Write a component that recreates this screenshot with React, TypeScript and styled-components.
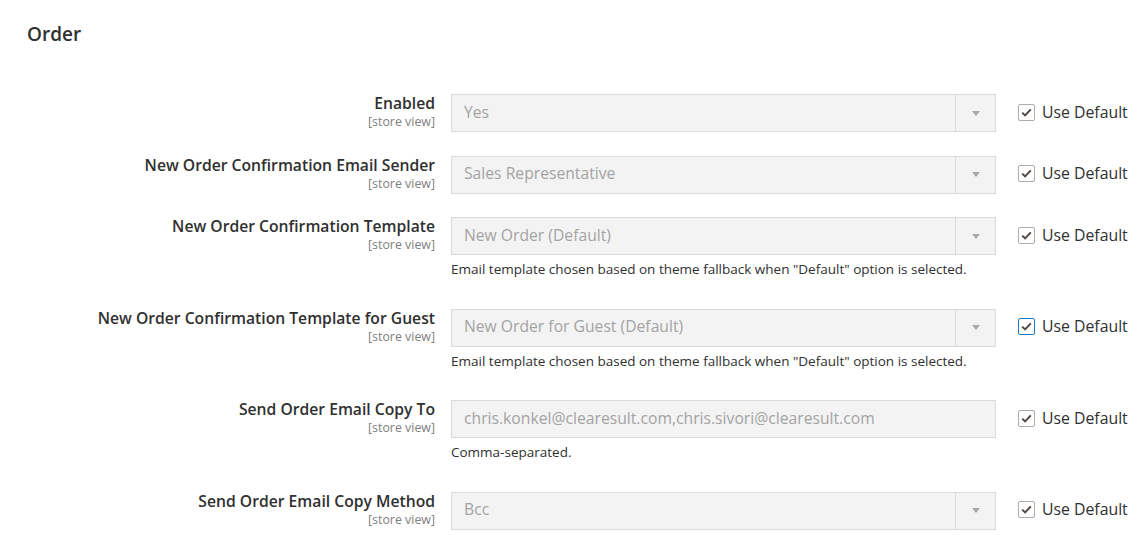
import React from "react";
import styled, { createGlobalStyle } from "styled-components";

const Global = createGlobalStyle`
  html, body { margin: 0; padding: 0; background: #ffffff; }
  body { font-family: "Open Sans", "Liberation Sans", sans-serif; color: #303030; }
`;

const Page = styled.div`
  width: 1142px;
  height: 538px;
  overflow: hidden;
  box-sizing: border-box;
  padding: 22px 0 0 27px;
`;

const Title = styled.h2`
  margin: 0;
  font-size: 19px;
  line-height: 24px;
  font-weight: 600;
  color: #303030;
`;

const Form = styled.div`
  display: flex;
  flex-direction: column;
  gap: 23.2px;
  margin-top: 48px;
`;

const Row = styled.div`
  display: grid;
  grid-template-columns: 408px 545px auto;
  column-gap: 16px;
  align-items: start;
`;

const LabelCol = styled.div`
  display: flex;
  flex-direction: column;
  align-items: flex-end;
  text-align: right;
`;

const Label = styled.div`
  font-size: 15.7px;
  line-height: 18px;
  font-weight: 600;
  color: #303030;
  white-space: nowrap;
`;

const Scope = styled.div`
  font-size: 12.4px;
  line-height: 20.4px;
  color: #808080;
`;

const ControlCol = styled.div`
  display: flex;
  flex-direction: column;
`;

const Box = styled.div`
  box-sizing: border-box;
  height: 38px;
  display: flex;
  align-items: center;
  background: #f3f3f3;
  border: 1px solid #dadada;
  color: #a3a3a3;
  font-size: 15.7px;
`;

const BoxText = styled.span`
  flex: 1;
  padding: 0 0 3px 12px;
  white-space: nowrap;
`;

const ArrowCell = styled.span`
  width: 39px;
  height: 100%;
  border-left: 1px solid #dadada;
  display: flex;
  align-items: center;
  justify-content: center;
`;

const Arrow = styled.span`
  width: 0;
  height: 0;
  border-left: 4px solid transparent;
  border-right: 4px solid transparent;
  border-top: 5px solid #a8a8a8;
`;

const Note = styled.div`
  font-size: 13.5px;
  line-height: 17px;
  padding: 6px 0 7.3px;
  color: #303030;
  white-space: nowrap;
`;

const DefaultCol = styled.label`
  display: flex;
  align-items: center;
  gap: 7px;
  height: 35px;
  margin-left: 6px;
  font-size: 15.8px;
  color: #303030;
  white-space: nowrap;
`;

const Check = styled.span<{ $focus?: boolean }>`
  box-sizing: border-box;
  width: 17px;
  height: 17px;
  margin-top: 1px;
  border: 1px solid ${(p) => (p.$focus ? "#1979c3" : "#adadad")};
  border-radius: 2px;
  background: #fff;
  display: flex;
  align-items: center;
  justify-content: center;
`;

type Field = {
  label: string;
  value: string;
  select?: boolean;
  note?: string;
  focus?: boolean;
};

const fields: Field[] = [
  { label: "Enabled", value: "Yes", select: true },
  { label: "New Order Confirmation Email Sender", value: "Sales Representative", select: true },
  {
    label: "New Order Confirmation Template",
    value: "New Order (Default)",
    select: true,
    note: 'Email template chosen based on theme fallback when "Default" option is selected.',
  },
  {
    label: "New Order Confirmation Template for Guest",
    value: "New Order for Guest (Default)",
    select: true,
    focus: true,
    note: 'Email template chosen based on theme fallback when "Default" option is selected.',
  },
  {
    label: "Send Order Email Copy To",
    value: "chris.konkel@clearesult.com,chris.sivori@clearesult.com",
    note: "Comma-separated.",
  },
  { label: "Send Order Email Copy Method", value: "Bcc", select: true },
];

const CheckMark = () => (
  <svg width="11" height="9" viewBox="0 0 11 9">
    <path d="M1.2 4.6 L4.1 7.4 L9.8 1.4" fill="none" stroke="#514943" strokeWidth="2" />
  </svg>
);

export default function App() {
  return (
    <Page>
      <Global />
      <Title>Order</Title>
      <Form>
        {fields.map((f) => (
          <Row key={f.label}>
            <LabelCol>
              <Label>{f.label}</Label>
              <Scope>[store view]</Scope>
            </LabelCol>
            <ControlCol>
              <Box>
                <BoxText>{f.value}</BoxText>
                {f.select && (
                  <ArrowCell>
                    <Arrow />
                  </ArrowCell>
                )}
              </Box>
              {f.note && <Note>{f.note}</Note>}
            </ControlCol>
            <DefaultCol>
              <Check $focus={f.focus}>
                <CheckMark />
              </Check>
              Use Default
            </DefaultCol>
          </Row>
        ))}
      </Form>
    </Page>
  );
}
